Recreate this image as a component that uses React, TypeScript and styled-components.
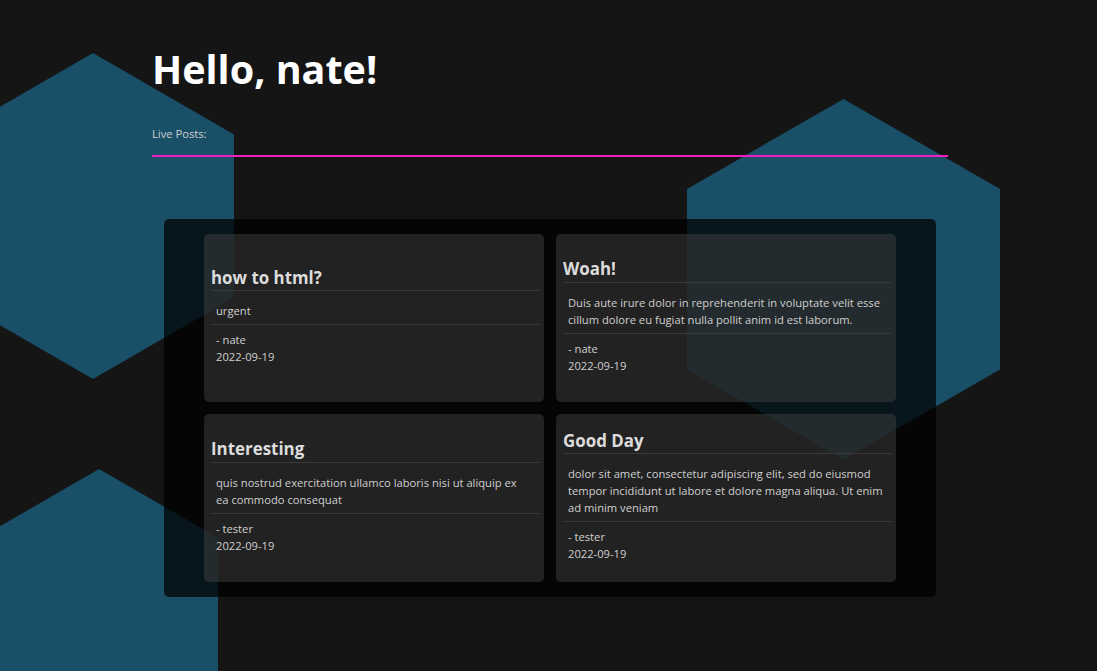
import React from "react";
import styled, { createGlobalStyle } from "styled-components";

const GlobalStyle = createGlobalStyle`
  html, body {
    margin: 0;
    padding: 0;
    background: #151515;
    font-family: "Open Sans", "Noto Sans", sans-serif;
  }
  * { box-sizing: border-box; }
`;

const Page = styled.div`
  position: relative;
  min-height: 671px;
  overflow: hidden;
`;

const Backdrop = styled.svg`
  position: absolute;
  left: 0;
  top: 0;
  width: 1097px;
  height: 671px;
  z-index: 0;
  pointer-events: none;
`;

const Content = styled.main`
  position: relative;
  z-index: 1;
  width: 796px;
  margin-left: 152px;
  padding-top: 42px;
  display: flex;
  flex-direction: column;
`;

const Title = styled.h1`
  margin: 0;
  font-size: 39.5px;
  font-weight: 700;
  line-height: 54px;
  color: #ffffff;
`;

const Label = styled.div`
  margin-top: 30px;
  font-size: 11.2px;
  line-height: 16px;
  color: #cfcfcf;
`;

const Rule = styled.div`
  margin-top: 13px;
  height: 2px;
  background: #f01dbf;
`;

const Board = styled.section`
  margin: 62px 12px 0;
  padding: 15px 40px;
  border-radius: 5px;
  background: rgba(0, 0, 0, 0.72);
  display: grid;
  grid-template-columns: 340px 340px;
  grid-auto-rows: 168px;
  gap: 12px;
`;

const Card = styled.article`
  border-radius: 5px;
  background: rgba(64, 64, 64, 0.5);
  padding: 0 5px 6px 7px;
  display: flex;
  flex-direction: column;
  justify-content: center;
`;

const CardTitle = styled.h3`
  margin: 0;
  font-size: 16.9px;
  font-weight: 700;
  line-height: 25.5px;
  color: #dcdcdc;
  border-bottom: 1px solid #3a3a3a;
`;

const CardBody = styled.p`
  margin: 0;
  padding: 11px 7.5px 5px 5px;
  font-size: 11.2px;
  line-height: 17px;
  color: #d0d0d0;
  border-bottom: 1px solid #3a3a3a;
`;

const CardMeta = styled.div`
  padding: 6px 5px 0;
  font-size: 11.2px;
  line-height: 17px;
  color: #d0d0d0;
`;

const posts = [
  { title: "how to html?", body: "urgent", author: "nate", date: "2022-09-19" },
  {
    title: "Woah!",
    body: "Duis aute irure dolor in reprehenderit in voluptate velit esse cillum dolore eu fugiat nulla pollit anim id est laborum.",
    author: "nate",
    date: "2022-09-19",
  },
  {
    title: "Interesting",
    body: "quis nostrud exercitation ullamco laboris nisi ut aliquip ex ea commodo consequat",
    author: "tester",
    date: "2022-09-19",
  },
  {
    title: "Good Day",
    body: "dolor sit amet, consectetur adipiscing elit, sed do eiusmod tempor incididunt ut labore et dolore magna aliqua. Ut enim ad minim veniam",
    author: "tester",
    date: "2022-09-19",
  },
];

const HEX = "#1a4f68";

export default function App() {
  return (
    <Page>
      <GlobalStyle />
      <Backdrop viewBox="0 0 1097 671" aria-hidden="true">
        <polygon fill={HEX} points="93,53 234,134.5 234,297.5 93,379 -48,297.5 -48,134.5" />
        <polygon fill={HEX} points="843.5,99 1000,189 1000,369.5 843.5,459.5 687,369.5 687,189" />
        <polygon fill={HEX} points="99,469 218,537.75 218,675.25 99,744 -20,675.25 -20,537.75" />
      </Backdrop>
      <Content>
        <Title>Hello, nate!</Title>
        <Label>Live Posts:</Label>
        <Rule />
        <Board>
          {posts.map((p) => (
            <Card key={p.title}>
              <CardTitle>{p.title}</CardTitle>
              <CardBody>{p.body}</CardBody>
              <CardMeta>
                - {p.author}
                <br />
                {p.date}
              </CardMeta>
            </Card>
          ))}
        </Board>
      </Content>
    </Page>
  );
}
